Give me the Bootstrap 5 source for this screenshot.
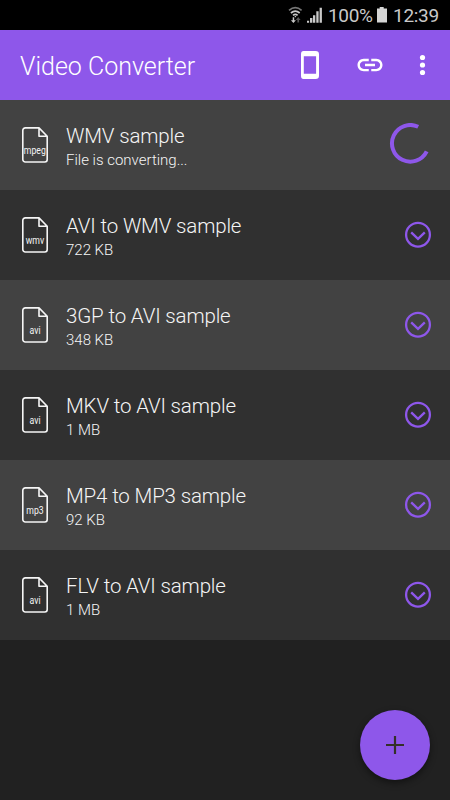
<!DOCTYPE html>
<html lang="en">
<head>
<meta charset="utf-8">
<meta name="viewport" content="width=device-width, initial-scale=1">
<title>Video Converter</title>
<link href="https://cdn.jsdelivr.net/npm/bootstrap@5.3.0/dist/css/bootstrap.min.css" rel="stylesheet">
<style>
body{background:#212121;font-family:Roboto,"Liberation Sans",sans-serif;color:#f5f5f5;height:800px}
svg{display:block;flex:none}
.status-bar{height:30px;background:#000;color:#c9c9c9;font-size:19px;line-height:30px;padding-left:288px}
.status-bar svg{margin-top:6px}
.pct{margin-left:4px;width:48px;letter-spacing:-.35px;padding-top:1px}
.clock{margin-left:5px;letter-spacing:-.3px;padding-top:1px}
.app-bar{height:70px;background:#8e57ea;padding:0 13px 0 20px}
.app-title{font-size:25px;font-weight:300;line-height:30px;margin-top:4px;color:#fff}
.app-bar .btn{color:#fff}
.link-btn{margin-left:30px}
.more-btn{margin-left:22px}
.file-row{height:90px;background:#303030;padding:0 18px 0 21px}
.file-row:nth-child(odd){background:#424242}
.file-name{font-size:20.5px;letter-spacing:-.15px;font-weight:300;line-height:24px}
.file-info{font-size:15px;font-weight:300;line-height:20px;margin-top:2px}
.file-text{margin-left:17px;padding-top:3px}
.file-icon text{font:10.6px Roboto,sans-serif;fill:#f5f5f5;text-anchor:middle}
.accent{stroke:#8e57ea;fill:none}
.spin{margin-right:1px;margin-top:-2px}
.fab{right:20px;bottom:20px;width:70px;height:70px;background:#8e57ea;box-shadow:0 3px 7px rgba(0,0,0,.45)}
</style>
<script src="https://cdn.jsdelivr.net/npm/bootstrap@5.3.0/dist/js/bootstrap.bundle.min.js"></script>
</head>
<body class="position-relative overflow-hidden">
<svg width="0" height="0" class="position-absolute">
  <symbol id="page" viewBox="0 0 28 38"><path d="M4 1.9H18L26.2 10.2V33.5a2.5 2.5 0 0 1-2.5 2.5H4.3A2.5 2.5 0 0 1 1.8 33.5V4.4A2.5 2.5 0 0 1 4.3 1.9ZM18 2V10.2H26" fill="none" stroke="#f5f5f5" stroke-width="1.6" stroke-linejoin="round"/></symbol>
  <symbol id="down" viewBox="0 0 28 28"><circle cx="14" cy="13.7" r="11.9" class="accent" stroke-width="2.3"/><path d="M7.2 11.3 14 17.9l6.8-6.6" class="accent" stroke-width="2.3"/></symbol>
</svg>
<div class="status-bar d-flex">
  <svg width="16" height="18" viewBox="0 0 16 18" fill="none" stroke="#c9c9c9"><path d="M1 4.3Q7.3-.9 13.6 4.3" stroke="#777" stroke-width="1.7"/><path d="M2.9 7Q7.3 3.2 11.7 7M5 9.3Q7.3 7.4 9.6 9.3" stroke-width="1.7"/><path d="M6.4 10h2L7.4 11.5z" fill="#c9c9c9" stroke="none"/><path d="M4.7 11.2h1.5v3h1.7l-2.5 2.7-2.5-2.7h1.8z" fill="#c9c9c9" stroke="none"/><path d="M9.4 16.4v-2.5H7.8l2.4-2.8 2.4 2.8h-1.5v2.5z" fill="#555" stroke="none"/></svg>
  <svg width="20" height="18" viewBox="0 0 20 18" fill="#c9c9c9"><path d="M3 14.8h2.1v2H3zM6 12h2.4v4.8H6zM9 9.2h2.3v7.6H9zM12.3 5.3h2.3v11.5h-2.3zM15.6 1.7h2.3v15.1h-2.3z"/></svg>
  <span class="pct">100%</span>
  <svg width="12" height="18" viewBox="0 0 12 18" fill="#d5d5d5"><path d="M3.7 1h4v1.6H11v14H1v-14h2.7z"/></svg>
  <span class="clock">12:39</span>
</div>
<nav class="app-bar d-flex align-items-center">
  <h1 class="app-title mb-0 me-auto">Video Converter</h1>
  <button class="btn p-0 border-0" aria-label="Device"><svg width="30" height="30" viewBox="0 0 30 30"><path fill-rule="evenodd" fill="currentColor" d="M8.5 1h12Q24 1 24 4.3v21.4Q24 29 20.5 29h-12Q6 29 6 25.7V4.3Q6 1 8.5 1ZM8.8 6.2v17.6h12.3V6.2z"/></svg></button>
  <button class="link-btn btn p-0 border-0" aria-label="Link"><svg width="30" height="30" viewBox="0 0 24 24"><path fill="currentColor" d="M3.9 12c0-1.71 1.39-3.1 3.1-3.1h4V7H7c-2.76 0-5 2.24-5 5s2.24 5 5 5h4v-1.9H7c-1.71 0-3.1-1.39-3.1-3.1zM8 13h8v-2H8v2zm9-6h-4v1.9h4c1.71 0 3.1 1.39 3.1 3.1s-1.39 3.1-3.1 3.1h-4V17h4c2.76 0 5-2.24 5-5s-2.24-5-5-5z"/></svg></button>
  <button class="more-btn btn p-0 border-0" aria-label="More"><svg width="30" height="30" viewBox="0 0 30 30" fill="currentColor"><circle cx="15.5" cy="7.5" r="2.6"/><circle cx="15.5" cy="15" r="2.6"/><circle cx="15.5" cy="22.5" r="2.6"/></svg></button>
</nav>
<main>
  <div class="file-row d-flex align-items-center">
    <svg class="file-icon" width="28" height="38" viewBox="0 0 28 38"><use href="#page"/><text transform="translate(13.8 28) scale(.82 1)">mpeg</text></svg>
    <div class="file-text me-auto"><div class="file-name">WMV sample</div><div class="file-info">File is converting...</div></div>
    <svg class="spin" width="42" height="42" viewBox="0 0 42 42"><path class="accent" stroke-width="4" d="M29.2 3.8A18.3 18.3 0 1 0 37.7 28.4"/></svg>
  </div>
  <div class="file-row d-flex align-items-center">
    <svg class="file-icon" width="28" height="38" viewBox="0 0 28 38"><use href="#page"/><text transform="translate(14 28) scale(.82 1)">wmv</text></svg>
    <div class="file-text me-auto"><div class="file-name">AVI to WMV sample</div><div class="file-info">722 KB</div></div>
    <svg width="28" height="28"><use href="#down"/></svg>
  </div>
  <div class="file-row d-flex align-items-center">
    <svg class="file-icon" width="28" height="38" viewBox="0 0 28 38"><use href="#page"/><text transform="translate(14 28) scale(.82 1)">avi</text></svg>
    <div class="file-text me-auto"><div class="file-name">3GP to AVI sample</div><div class="file-info">348 KB</div></div>
    <svg width="28" height="28"><use href="#down"/></svg>
  </div>
  <div class="file-row d-flex align-items-center">
    <svg class="file-icon" width="28" height="38" viewBox="0 0 28 38"><use href="#page"/><text transform="translate(14 28) scale(.82 1)">avi</text></svg>
    <div class="file-text me-auto"><div class="file-name">MKV to AVI sample</div><div class="file-info">1 MB</div></div>
    <svg width="28" height="28"><use href="#down"/></svg>
  </div>
  <div class="file-row d-flex align-items-center">
    <svg class="file-icon" width="28" height="38" viewBox="0 0 28 38"><use href="#page"/><text transform="translate(14 28) scale(.82 1)">mp3</text></svg>
    <div class="file-text me-auto"><div class="file-name">MP4 to MP3 sample</div><div class="file-info">92 KB</div></div>
    <svg width="28" height="28"><use href="#down"/></svg>
  </div>
  <div class="file-row d-flex align-items-center">
    <svg class="file-icon" width="28" height="38" viewBox="0 0 28 38"><use href="#page"/><text transform="translate(14 28) scale(.82 1)">avi</text></svg>
    <div class="file-text me-auto"><div class="file-name">FLV to AVI sample</div><div class="file-info">1 MB</div></div>
    <svg width="28" height="28"><use href="#down"/></svg>
  </div>
</main>
<button class="fab btn p-0 border-0 rounded-circle position-absolute d-flex align-items-center justify-content-center" aria-label="Add"><svg width="18" height="18" viewBox="0 0 18 18"><path d="M9 0v18M0 9h18" stroke="#34302a" stroke-width="2.2"/></svg></button>
</body>
</html>
